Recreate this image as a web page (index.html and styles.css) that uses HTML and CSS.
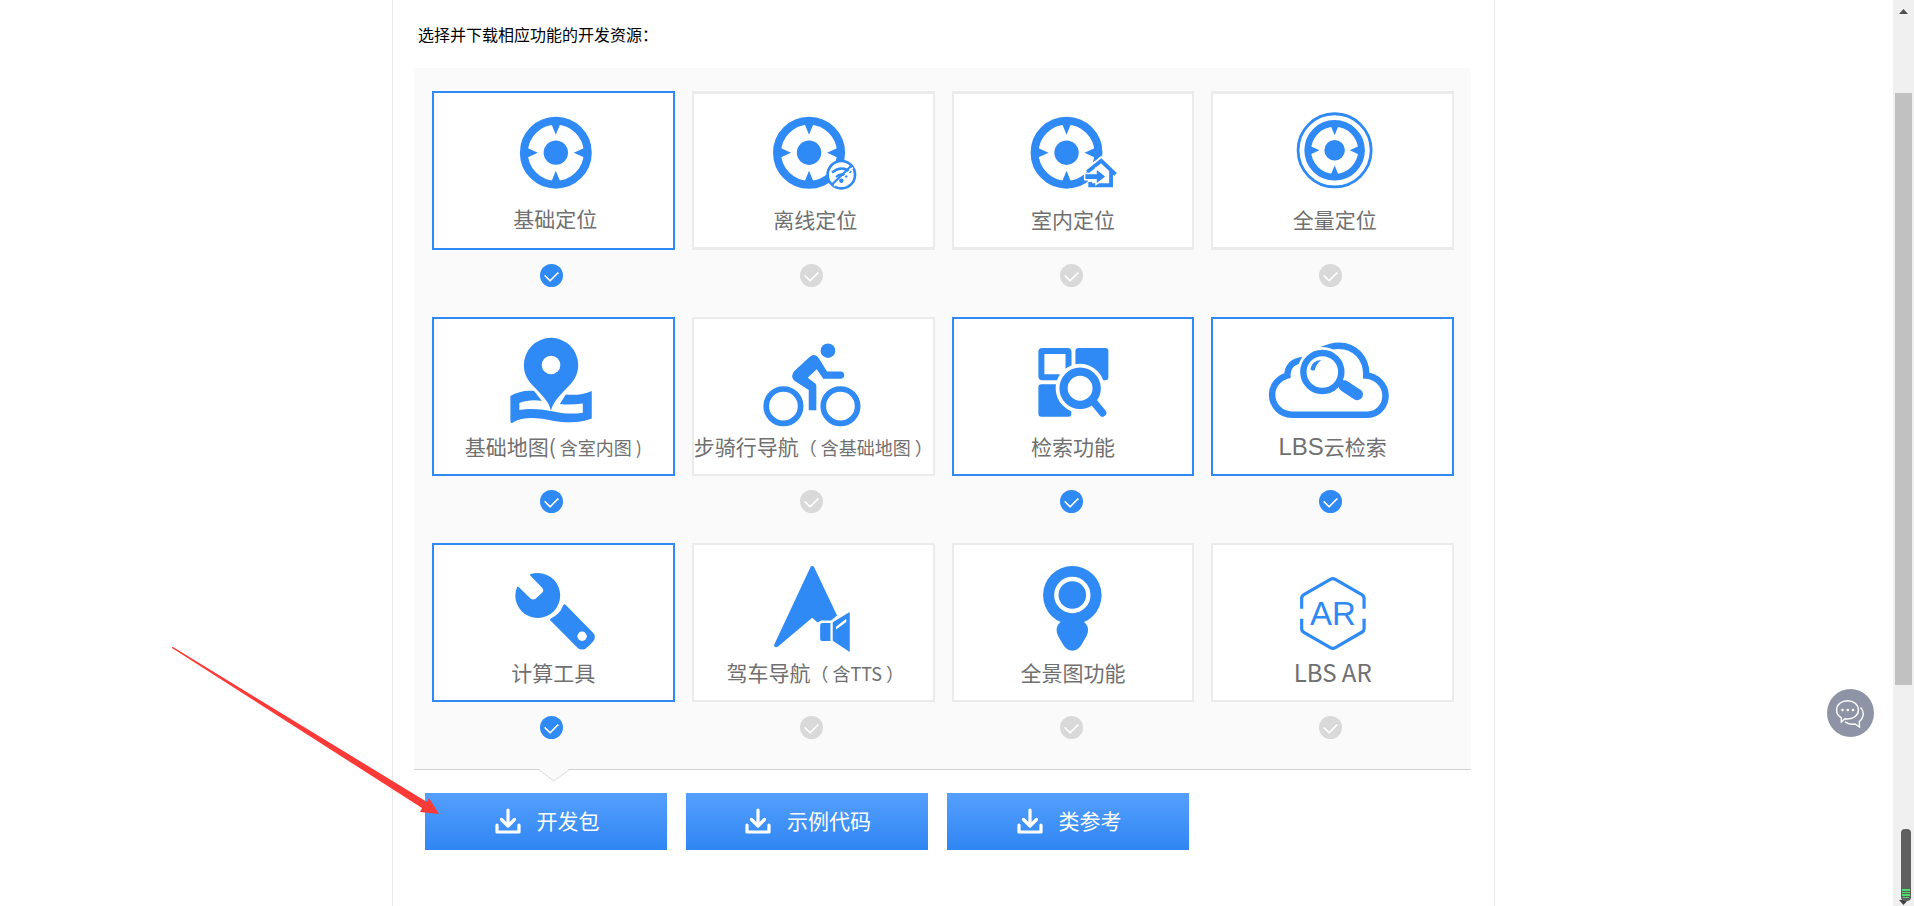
FILE: index.html
```html
<!DOCTYPE html>
<html lang="zh-CN">
<head>
<meta charset="utf-8">
<title>开发资源下载</title>
<link rel="stylesheet" href="styles.css">
</head>
<body>
<svg class="defs" aria-hidden="true">
  <symbol id="target" viewBox="-36 -36 72 72" overflow="visible">
    <circle r="32" fill="none" stroke="currentColor" stroke-width="8"/>
    <circle r="12.2" fill="currentColor"/>
    <path fill="currentColor" d="M-4.500-29h9L0-18zM-4.500 29h9L0 18zM-29-5v10L-18 0zM29-5v10L18 0z"/>
  </symbol>
  <symbol id="download" viewBox="0 0 26 26">
    <path d="M13 2v15M6.500 11.500l6.500 6.500 6.500-6.500M2 17v7h22v-7" fill="none" stroke="#fff" stroke-width="3.200" stroke-linecap="round" stroke-linejoin="round"/>
  </symbol>
</svg>

<div class="stage">
  <main class="content">
    <p class="intro">选择并下载相应功能的开发资源：</p>
    <form class="form">
      <div class="panel">
        <div class="grid">

          <label class="item">
            <span class="card card-short">
              <svg class="icon" viewBox="0 0 239 110"><use href="#target" x="86" y="23.700" width="72" height="72"/></svg>
              <span class="name name-shift">基础定位</span>
            </span>
            <input class="check" type="checkbox" checked>
          </label>

          <label class="item">
            <span class="card card-short card-thick">
              <svg class="icon" viewBox="0 1 239 110"><use href="#target" x="79" y="23.700" width="72" height="72"/>
                <circle cx="147.300" cy="81.700" r="13.700" fill="#fff" stroke="currentColor" stroke-width="2.600"/>
                <g fill="none" stroke="currentColor" stroke-width="2.300">
                  <path d="M138 79.500Q147.500 71.500 157 79.500M142 84Q147.500 79 153 84"/>
                  <path d="M138 91.500L157.500 72.500"/>
                </g>
                <path d="M139.800 93.200L159 74.500" stroke="#fff" stroke-width="1.200"/>
                <circle cx="147.300" cy="87.800" r="2.200" fill="currentColor"/>
              </svg>
              <span class="name name-shift">离线定位</span>
            </span>
            <input class="check" type="checkbox">
          </label>

          <label class="item">
            <span class="card card-short card-thick">
              <svg class="icon" viewBox="0 1 239 110"><use href="#target" x="76.700" y="23.700" width="72" height="72"/>
                <path d="M134 78.500L147.400 67.500 161.500 80.500M157.300 78V92.300H136.400V89" fill="#fff" stroke="#fff" stroke-width="7"/>
                <path d="M134 94V72L147.400 65 160 77V94z" fill="#fff"/>
                <path d="M133.500 79L147.400 67.800 161.800 81.500M157.300 77.500V92.300H136.400V89" fill="none" stroke="currentColor" stroke-width="3.800"/>
                <path d="M131.600 81.300H143V77L151.300 83.600 143 90V86H131.600z" fill="currentColor" stroke="#fff" stroke-width="3" paint-order="stroke"/>
              </svg>
              <span class="name">室内定位</span>
            </span>
            <input class="check" type="checkbox">
          </label>

          <label class="item">
            <span class="card card-short card-thick">
              <svg class="icon" viewBox="0 1 239 110"><use href="#target" x="91.500" y="27" width="60.600" height="60.600"/>
                <circle cx="121.800" cy="57.300" r="36.600" fill="none" stroke="currentColor" stroke-width="2.800"/>
              </svg>
              <span class="name name-shift">全量定位</span>
            </span>
            <input class="check" type="checkbox">
          </label>

          <label class="item">
            <span class="card">
              <svg class="icon" viewBox="0 0 239 112" fill="currentColor">
                <path d="M76.500 77C83 73 92 71 100.300 72L108 82C100 80.500 92 81.500 85.500 84V91C97 89 108 90.500 117.200 92C128 94.500 138 95.500 149 93.700V84.500C141 85.700 133 86 126 85L132 75.500C141 76.500 150 75.500 158 72V99.500C150 103 135 104.500 120 102C105 99 90 97 79 103.500Q76.500 105 76.500 102z"/>
                <path d="M117.200 91.700C115 82 107 75 98 65.500C93 60 90 54 90 46a27.200 27.200 0 0 1 54.400 0C144.400 54 141.400 60 136.400 65.500C127.400 75 119.400 82 117.200 91.700z" stroke="#fff" stroke-width="4" paint-order="stroke"/>
                <circle cx="117.200" cy="46" r="9.300" fill="#fff"/>
              </svg>
              <span class="name">基础地图(<small class="note">&nbsp;含室内图 )</small></span>
            </span>
            <input class="check" type="checkbox" checked>
          </label>

          <label class="item">
            <span class="card">
              <svg class="icon" viewBox="0 0 239 112" fill="currentColor">
                <g fill="none" stroke="currentColor" stroke-width="5.700">
                  <circle cx="89.400" cy="87.200" r="17.200"/><circle cx="146.400" cy="87.200" r="17.200"/>
                </g>
                <circle cx="133.900" cy="31.700" r="7.300"/>
                <path d="M115.800 37.700Q121 33.500 125.400 40.300L133 52.400H146.500a3.600 3.600 0 0 1 0 7.300H129.200L122.700 50.300 113.700 58.700 121.300 64.500Q122.300 65.500 122.300 67V91.300H114.700V71L100 61.500Q96 57 100.300 52z"/>
              </svg>
              <span class="name">步骑行导航<small class="note">（&nbsp;含基础地图 ）</small></span>
            </span>
            <input class="check" type="checkbox">
          </label>

          <label class="item">
            <span class="card">
              <svg class="icon" viewBox="0 0 239 112" fill="currentColor">
                <rect x="87.500" y="32" width="27.200" height="26.300" rx="1" fill="none" stroke="currentColor" stroke-width="6" stroke-linejoin="round"/>
                <rect x="121.600" y="29" width="33" height="32.300" rx="3"/>
                <rect x="84.500" y="65.300" width="33" height="32.400" rx="3"/>
                <circle cx="126.300" cy="69.300" r="24.500" fill="#fff"/>
                <circle cx="126.300" cy="69.300" r="16.600" fill="none" stroke="currentColor" stroke-width="8.300"/>
                <path d="M139 82L148.800 94" stroke="currentColor" stroke-width="7.500" stroke-linecap="round"/>
              </svg>
              <span class="name">检索功能</span>
            </span>
            <input class="check" type="checkbox" checked>
          </label>

          <label class="item">
            <span class="card">
              <svg class="icon" viewBox="0 0 239 112" fill="none" stroke="currentColor">
                <path d="M91 41C80 41.500 74.500 48 74.500 56.500C66 59 59.200 66 59.200 75.500C59.200 87 68 95.700 79 95.700H155C165 95.700 172.800 87 172.800 76.500C172.800 66 164 57.500 153.500 56.500C154 40 143 26.600 126 26.600Q118 26.600 109 31" stroke-width="6.500"/>
                <circle cx="109.500" cy="53" r="25" fill="#fff" stroke="none"/>
                <circle cx="109.500" cy="53" r="19" stroke-width="6.400"/>
                <path d="M131.500 67L144.500 75.500" stroke-width="11.500" stroke-linecap="round"/>
                <path d="M126 64L132 68" stroke-width="5"/>
                <path d="M97.600 50Q99 41.500 108.500 41Q103 45 102 51Q99 52.500 97.600 50z" fill="currentColor" stroke="none"/>
              </svg>
              <span class="name"><span class="latin latin-wide">LBS</span>云检索</span>
            </span>
            <input class="check" type="checkbox" checked>
          </label>

          <label class="item">
            <span class="card">
              <svg class="icon" viewBox="0 0 239 112" fill="currentColor">
                <path d="M96.200 30.300Q95.500 29.500 97 29Q100 28 103.900 28A22.500 22.500 0 1 1 81.400 50.500Q81.400 46 83.300 42Q83.800 41 84.800 42L96.700 53.500Q99.500 55.700 102 53.500L108.300 47.700Q110.500 45.300 108.500 43z"/>
                <path d="M132 60L159.500 88Q162.500 91.500 160 95.500Q156 101 151.300 104Q147.500 105.500 144.500 103.500L116.600 75.500Q115.500 74.300 117 73.500Q126 69.500 129.300 60.500Q130.500 58.500 132 60z"/>
                <circle cx="148.300" cy="91.300" r="4.700" fill="#fff"/>
              </svg>
              <span class="name">计算工具</span>
            </span>
            <input class="check" type="checkbox" checked>
          </label>

          <label class="item">
            <span class="card">
              <svg class="icon" viewBox="0 0 239 112" fill="currentColor">
                <path d="M116.500 22Q118.200 20 120 22L143 70.500 137 75.500H127L123.500 77.500 118.200 72.800 84 101.500Q80.500 103.500 80 100z"/>
                <path d="M128 78H136.400V96H128Q126.100 96 126.100 93.500V80.500Q126.100 78 128 78zM138.700 77.300L155.700 67V107L138.700 95.700z" stroke="#fff" stroke-width="2" paint-order="stroke"/>
                <path d="M142 81.700L152.300 73.700V77L142 84.500z" fill="#fff"/>
              </svg>
              <span class="name name-shift">驾车导航<small class="note">（&nbsp;含TTS ）</small></span>
            </span>
            <input class="check" type="checkbox">
          </label>

          <label class="item">
            <span class="card">
              <svg class="icon" viewBox="0 0 239 112" fill="currentColor">
                <circle cx="118.500" cy="50.300" r="29.300"/>
                <path d="M110 75Q102.700 78.500 102.700 85Q102.700 88 104.500 91.500L109.500 100Q113 105.700 118.500 105.700Q124 105.700 127.500 100L132.500 91.500Q134.300 88 134.300 85Q134.300 78.500 127 75z"/>
                <circle cx="118.500" cy="50" r="16" fill="none" stroke="#fff" stroke-width="4.400"/>
              </svg>
              <span class="name">全景图功能</span>
            </span>
            <input class="check" type="checkbox">
          </label>

          <label class="item">
            <span class="card">
              <svg class="icon" viewBox="0 0 239 112">
                <path d="M88.800 63.700V53.500Q88.800 51 91 49.700L117.500 34.300Q120 33 122.500 34.300L149 49.700Q151.300 51 151.300 53.500V63.700M88.800 73.700V83.500Q88.800 86 91 87.300L117.500 102.700Q120 104 122.500 102.700L149 87.300Q151.300 86 151.300 83.500V73.700" fill="none" stroke="currentColor" stroke-width="3.200"/>
                <text class="ar" x="120" y="80" text-anchor="middle">AR</text>
              </svg>
              <span class="name"><span class="latin">LBS AR</span></span>
            </span>
            <input class="check" type="checkbox">
          </label>

        </div>
        <svg class="notch" viewBox="0 0 30 13" aria-hidden="true">
          <path d="M0 0H30L15 12z" fill="#fafafa"/>
          <path d="M0 1L15 12 30 1" fill="none" stroke="#dcdcdc"/>
        </svg>
      </div>
      <div class="actions">
        <button class="button" type="button"><svg class="glyph"><use href="#download"/></svg>开发包</button>
        <button class="button" type="button"><svg class="glyph"><use href="#download"/></svg>示例代码</button>
        <button class="button" type="button"><svg class="glyph"><use href="#download"/></svg>类参考</button>
      </div>
    </form>
  </main>
</div>

<svg class="pointer" viewBox="0 0 268 168" aria-hidden="true">
  <path d="M0 0L1 0 255 155 257 151 267 167 248 165 250 161 0 1z" fill="#fc3a38"/>
</svg>

<button class="chat" type="button" aria-label="在线咨询">
  <svg viewBox="0 0 47 48" fill="none" stroke="#fff" stroke-width="1.400">
    <path d="M14.300 28.600C11 26.800 9.600 24 9.600 21C9.600 15.600 14.600 11.700 20.500 11.700S31.400 15.600 31.400 21S26.500 30 20.500 30Q19 30 17.800 29.800L14.300 33z"/>
    <path d="M33.400 18.500C36 21 36.700 24.500 35.800 27.500Q35 30.500 32.300 32.500L32.500 38L28 35Q22 36 18 32.800"/>
    <g fill="#fff" stroke="none"><circle cx="15.500" cy="21" r="1.300"/><circle cx="20.800" cy="21" r="1.300"/><circle cx="26" cy="21" r="1.300"/></g>
  </svg>
</button>

<div class="scrollbar" aria-hidden="true">
  <svg class="up" viewBox="0 0 9 5"><path d="M0 5L4.500 0 9 5z"/></svg>
  <div class="thumb"></div>
  <div class="rest"></div>
  <svg class="meter" viewBox="0 0 16 78">
    <path d="M2 72h9L6.500 77z" fill="#404040"/>
    <rect x="4" y="1" width="10" height="72" rx="4" fill="#606060"/>
    <path d="M5 61h8v2H5zM5 64h8v1H5zM5 66h8v2H5zM6 69h6v1H6z" fill="#4be06a"/>
  </svg>
</div>
</body>
</html>
```
FILE: styles.css
```css
* {
  box-sizing: border-box;
}

body {
  display: grid;
  grid-template-columns: 1fr 21px;
  min-height: 100vh;
  margin: 0;
  background: #fff;
  color: #000;
  font-family: "Noto Sans CJK SC", sans-serif;
}

.defs {
  position: absolute;
  width: 0;
  height: 0;
}

.stage {
  display: flex;
  justify-content: center;
  padding-right: 6px;
}

.content {
  width: 100%;
  max-width: 1103px;
  padding: 24px 23px 0 21px;
  border: solid #e8e8e8;
  border-width: 0 1px;
}

.intro {
  margin: 0 0 24px 4px;
  font-size: 16px;
  line-height: 20px;
}

.panel {
  position: relative;
  padding: 23px 17px 30px 18px;
  border-bottom: 1px solid #d2d2d2;
  background: #fafafa;
}

.grid {
  display: grid;
  grid-template-columns: repeat(4, 1fr);
  gap: 30px 17px;
}

.item {
  display: flex;
  flex-direction: column;
  align-items: center;
  gap: 14px;
  cursor: pointer;
}

.card {
  display: flex;
  flex-direction: column;
  width: 100%;
  padding-bottom: 13px;
  border: 2px solid #ebebeb;
  background: #fff;
  color: #2f8af5;
}

.card-short {
  padding-bottom: 15px;
}

.card-thick {
  padding-bottom: 13px;
  border-block-width: 3px;
}

.item:has(.check:checked) .card {
  border-color: #2f8af5;
}

.icon {
  display: block;
  width: 100%;
  height: 112px;
}

.card-short .icon {
  height: 110px;
}

.name {
  height: 30px;
  color: #707070;
  font-size: 21px;
  line-height: 30px;
  text-align: center;
  white-space: nowrap;
}

.name-shift {
  padding-left: 4px;
}

.note {
  font-size: 18px;
}

.latin {
  font-size: 24px;
}

.latin-wide {
  font-family: "Liberation Sans", Arial, sans-serif;
}

.ar {
  fill: currentColor;
  font-family: "Liberation Sans", Arial, sans-serif;
  font-size: 33px;
}

.check {
  display: grid;
  width: 23px;
  height: 23px;
  margin: 0 4px 0 0;
  appearance: none;
  place-items: center;
  border-radius: 50%;
  background: #d9d9d9;
  cursor: pointer;
}

.check::before {
  width: 11px;
  height: 7px;
  margin-bottom: 3px;
  border: solid #fff;
  border-width: 0 0 2px 2px;
  border-radius: 1px;
  content: "";
  transform: rotate(-45deg);
}

.check:checked {
  background: #2f8af5;
}

.notch {
  position: absolute;
  bottom: -13px;
  left: 125px;
  width: 30px;
  height: 13px;
}

.actions {
  display: flex;
  gap: 19px;
  padding: 23px 0 56px 11px;
}

.button {
  display: flex;
  flex: 0 1 242px;
  align-items: center;
  justify-content: center;
  gap: 16px;
  padding: 11px 12px 13px 14px;
  border: 0;
  background: linear-gradient(#559ffe, #2f86f2);
  color: #fff;
  font-family: inherit;
  font-size: 21px;
  line-height: 33px;
  cursor: pointer;
}

.glyph {
  width: 26px;
  height: 26px;
}

.pointer {
  position: absolute;
  top: 647px;
  left: 172px;
  width: 268px;
  height: 168px;
  pointer-events: none;
}

.chat {
  position: fixed;
  right: 40px;
  bottom: 169px;
  width: 47px;
  height: 48px;
  padding: 0;
  border: 0;
  border-radius: 50%;
  background: #8e94a5;
  cursor: pointer;
}

.chat svg {
  display: block;
}

.scrollbar {
  position: relative;
  display: flex;
  flex-direction: column;
  padding: 9px 2px 0;
  background: #f0f0f0;
}

.up {
  width: 9px;
  height: 5px;
  margin: 0 4px 79px;
  fill: #505050;
}

.thumb {
  flex: 592;
  background: #c1c1c1;
}

.rest {
  flex: 221;
}

.meter {
  position: absolute;
  right: 1px;
  bottom: 0;
  width: 16px;
  height: 78px;
}
```
